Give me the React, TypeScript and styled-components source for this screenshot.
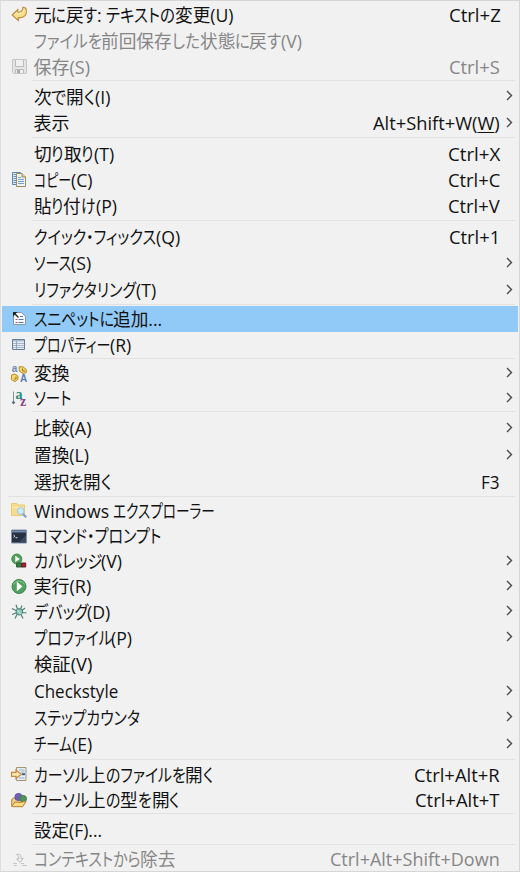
import React, { useLayoutEffect, useRef, useState } from "react";
import styled, { createGlobalStyle } from "styled-components";

const GlobalStyle = createGlobalStyle`
  html, body { margin: 0; padding: 0; background: #f1f1f1; }
`;

const Menu = styled.div`
  box-sizing: border-box;
  width: 520px;
  height: 872px;
  padding-top: 1px;
  overflow: hidden;
  background: #f1f1f1;
  border: 1px solid #d6d6d6;
  border-left-color: #dedede;
  font-family: "Open Sans", "Noto Sans CJK JP", sans-serif;
  font-size: 18px;
  font-feature-settings: "palt" 1;
  color: #111;
`;

const Row = styled.div<{ $height: number; $active?: boolean; $disabled?: boolean }>`
  display: grid;
  grid-template-columns: 16px 1fr auto 12px;
  align-items: center;
  box-sizing: border-box;
  height: ${(p) => p.$height}px;
  margin: 0 1px;
  padding: 0 2px 0 9px;
  line-height: ${(p) => p.$height}px;
  white-space: nowrap;
  color: ${(p) => (p.$disabled ? "#868686" : "#111")};
  background: ${(p) => (p.$active ? "#91c9f7" : "transparent")};
`;

const Separator = styled.div<{ $above: number; $below: number; $wide?: boolean }>`
  height: 1px;
  margin: ${(p) => p.$above}px 4px ${(p) => p.$below}px ${(p) => (p.$wide ? 7 : 31)}px;
  background: #e1e1e1;
`;

const IconSlot = styled.span`
  display: flex;
  width: 16px;
  height: 16px;
`;

const Label = styled.span`
  padding-left: 6.5px;
`;

const Shortcut = styled.span`
  padding-right: 4px;
`;

const Arrow = styled.svg`
  width: 12px;
  height: 12px;
  margin-bottom: 2px;
  fill: none;
  stroke: #4a4a4a;
  stroke-width: 1.4;
`;

const FitBox = styled.span`
  display: inline-flex;
  vertical-align: top;
  white-space: pre;
`;

const FitRun = styled.span`
  flex: none;
`;

const FitText = styled.span`
  display: inline-block;
  transform-origin: 0 50%;
`;

const Underline = styled.span`
  text-decoration: underline;
  text-underline-offset: 2px;
  text-decoration-thickness: 1px;
`;

const KANA = /([\u3040-\u30ff]+)/;

/**
 * Condenses its text horizontally until it takes the given width.
 * Where the text has kana, only the kana are condensed.
 */
function Fit({ width, children }: { width: number; children: React.ReactNode }) {
  const ref = useRef<HTMLSpanElement>(null);
  const [sizes, setSizes] = useState<{ width: number; scale: number }[]>([]);
  const runs: React.ReactNode[] =
    typeof children === "string" ? children.split(KANA).filter(Boolean) : [children];

  useLayoutEffect(() => {
    if (!ref.current) return;
    const natural = Array.from(
      ref.current.children,
      (run) => (run.firstElementChild as HTMLElement).offsetWidth
    );
    const isKana = runs.map((run) => typeof run === "string" && KANA.test(run));
    const hasKana = isKana.includes(true);
    const total = (keep: (i: number) => boolean) =>
      natural.reduce((sum, w, i) => (keep(i) ? sum + w : sum), 0);
    const flexible = total((i) => !hasKana || isKana[i]);
    const fixed = total((i) => hasKana && !isKana[i]) * 0.98;
    const scale = (width - fixed) / flexible;
    setSizes(
      natural.map((w, i) => {
        const s = !hasKana || isKana[i] ? scale : 0.98;
        return { width: w * s, scale: s };
      })
    );
  }, [width, children]);

  return (
    <FitBox ref={ref}>
      {runs.map((run, i) => (
        <FitRun key={i} style={{ width: sizes[i]?.width }}>
          <FitText style={{ transform: `scaleX(${sizes[i]?.scale ?? 1})` }}>{run}</FitText>
        </FitRun>
      ))}
    </FitBox>
  );
}

const Svg = styled.svg.attrs({ viewBox: "0 0 16 16", width: 16, height: 16 })`
  display: block;
  overflow: visible;
`;

const icons: Record<string, React.ReactNode> = {
  undo: (
    <Svg>
      <path d="M1.2 8 6.8 2.5V5.2C9.8 5.4 11.7 3.8 12 .3L14.8 1.2C17 7.5 13 11.3 7.3 10.8V13.6Z" fill="#fbdd83" stroke="#b98a3c" strokeWidth="1.1" />
      <path d="M3 8 5.9 5.4V7C10 7.3 12.6 5.4 13.2 2.2" fill="none" stroke="#fff2c4" />
    </Svg>
  ),
  save: (
    <Svg>
      <path d="M1.5.5H15.5V14.5H2.5L1.5 13.5Z" fill="#e4e4e4" stroke="#c6c6c6" />
      <path d="M4.5 1V7.5H12.5V1M4.5 14V10.5H12.5V14" fill="#f0f0f0" stroke="#bababa" />
      <path d="M6 11v3h3v-3Z" fill="#a9a9a9" />
    </Svg>
  ),
  copy: (
    <Svg>
      <path d="M1.5.5H9.5V12.5H1.5Z" fill="#dce9f6" stroke="#5d87ad" />
      <path d="M2.5 2.5H5M2.5 4.5H5M2.5 6.5H5M2.5 8.5H5M2.5 10.5H5" stroke="#6c93b9" />
      <path d="M5.5 1.5H11L14.5 5V14.5H5.5Z" fill="#e9f1f9" stroke="#9d8d59" />
      <path d="M11 1.5V5H14.5" fill="#e9d18e" stroke="#a08a4d" />
      <path d="M7 5.5H10M7 7.5H13M7 9.5H13M7 11.5H13" stroke="#7ba0c8" />
    </Svg>
  ),
  snippet: (
    <Svg>
      <path d="M2.5 1.5H10.5L14.5 5.5V13.5H2.5Z" fill="#f9fbff" stroke="#8297b2" />
      <path d="M2 1H6.5L2 5.5Z" fill="#222" />
      <path d="m4 3 3.5 3.5" stroke="#222" strokeWidth="1.3" />
      <path d="M4.5 8.5H6.5M4.5 11.5H6.5" stroke="#c25664" />
      <path d="M7.5 8.5H12.5M7.5 11.5H12.5M9 5.5H12" stroke="#5475b0" />
    </Svg>
  ),
  properties: (
    <Svg>
      <path d="M1.5 2.5H13.5V12.5H1.5Z" fill="#e6ecf5" stroke="#687b98" />
      <path d="M2 3H13V4.5H2Z" fill="#a9b9d0" />
      <path d="M2 6.5H13M2 8.5H13M2 10.5H13" stroke="#a9b7cc" />
      <path d="M5.5 4V12" stroke="#93a4bd" />
    </Svg>
  ),
  convert: (
    <Svg fontFamily="Liberation Sans" fontWeight="bold" fontSize="10">
      <text x=".7" y="6" fill="#6c89b8">a</text>
      <text x="9" y="16" fill="#5a7cb0">A</text>
      <path d="M8 .8H12L15.3 3.5V6.5L12 7.5 8.3 5ZM.5 9 4 8 7 10.3V13.2L4 15.7.5 13.5Z" fill="#f7d766" stroke="#b58a2c" />
      <path d="M11.5 2.5V5H14M3 13H5V10.5" fill="none" stroke="#9a7428" />
    </Svg>
  ),
  sort: (
    <Svg fontFamily="Liberation Serif" fontWeight="bold" fontSize="14">
      <path d="M2.5.5V12" stroke="#7a93a0" />
      <path d="M.7 11.5 2.5 9.8 4.3 11.5 2.5 13.5Z" fill="#5f6f7c" />
      <text x="4.5" y="7.5" fill="#288a7b">a</text>
      <text x="9" y="15.3" fill="#94428a">z</text>
    </Svg>
  ),
  explorer: (
    <Svg>
      <path d="M.5.5H6L7.5 2H13.5V12.5H.5Z" fill="#f8dc8e" stroke="#ecc873" />
      <path d="M1 4.5H13" stroke="#fff0b9" />
      <path d="m11.5 10.5 3.7 3.7" stroke="#7f9fc4" strokeWidth="2" />
      <circle cx="9.7" cy="8" r="3.4" fill="#cdeafb" stroke="#9fc3df" />
    </Svg>
  ),
  terminal: (
    <Svg>
      <path d="M.5 1H15.5V14H.5Z" fill="#27313f" stroke="#8494ad" />
      <path d="M1 1.5H15V3.5H1Z" fill="#7388aa" />
      <path d="M8 13.5 15 6V13.5Z" fill="#3b4a60" />
      <path d="m2.5 6 1.5 1.2-1.5 1.2M4.5 8.7H6.5" fill="none" stroke="#d4dfec" />
    </Svg>
  ),
  coverage: (
    <Svg>
      <circle cx="5.8" cy="5" r="5" fill="#4fa25a" stroke="#468a50" />
      <path d="m4.3 1.8 4.5 3.2-4.5 3.2Z" fill="#fff" />
      <path d="M5.5 9H10.5V13H5.5Z" fill="#28833d" stroke="#315f38" />
      <path d="M10.5 9H14.7V13H10.5Z" fill="#b01f2c" stroke="#5c2028" />
    </Svg>
  ),
  run: (
    <Svg>
      <circle cx="8" cy="7.5" r="7" fill="#4fa25f" stroke="#3f8450" />
      <path d="M2.5 5.5C4 1 12 1 13.5 5.5" fill="none" stroke="#8bc793" />
      <path d="M5.8 2.8 11.5 7.5 5.8 12.2Z" fill="#fff" />
    </Svg>
  ),
  debug: (
    <Svg>
      <path d="M6.5 5 5 .8M9.5 5l1.5-3.5M5 6.5 1 4.5M5 9 1 10.5M6 10.5l-2 4M10 10.5l2 4M11 6.5l3-2.5M11 8.5l4.5.5" fill="none" stroke="#4d7f76" strokeWidth="1.2" />
      <ellipse cx="8.3" cy="7.8" rx="3.3" ry="3.2" fill="#8cc8b4" stroke="#437f76" />
      <path d="m6 5.8 4.5 4.5" stroke="#d0eedb" />
    </Svg>
  ),
  openFile: (
    <Svg>
      <path d="M5.5.5H15V13.5H5.5Z" fill="#e6eff9" />
      <path d="M5.5 3V.5H15V13.5H5.5V11" fill="none" stroke="#a3966c" />
      <path d="M8 3H13.5M10 5H13.5M8 11H13.5" stroke="#8fb2d5" />
      <path d="M11 7.2H14" stroke="#3c6594" strokeWidth="2" />
      <path d="M.5 5.3H5V3L10.3 7.3 5 11.5V9.3H.5Z" fill="#fde6ac" stroke="#c08b42" strokeWidth="1.2" />
    </Svg>
  ),
  openType: (
    <Svg>
      <path d="M.7 13V6.5L2.5 5H6L7 7H12.5V9" fill="#f0cd83" stroke="#b8813c" />
      <circle cx="7.5" cy="4" r="3.6" fill="#7361ad" stroke="#6152a0" />
      <circle cx="12.2" cy="5.7" r="3.3" fill="#51945a" stroke="#448150" />
      <path d="M.7 13.5 4 9C8 10 10 9 15 8.5L11.7 13.7H1.7Z" fill="#fbdc85" stroke="#b87d30" />
    </Svg>
  ),
  remove: (
    <Svg>
      <path d="M2 11.5H6M10 11.5H13M3 13.5H6M11 13.5H16" stroke="#c4c4c4" />
      <path d="M5.5 2.5C8.5 1.5 10.5 3 10 6.5H12.2L9 10.5 5.5 7H7.7C7.7 5 7.2 3.7 5.5 2.5Z" fill="#ececec" stroke="#bdbdbd" />
    </Svg>
  ),
};

interface Item {
  label: string;
  width: number;
  height: number;
  icon?: string;
  keys?: React.ReactNode;
  keysWidth?: number;
  submenu?: boolean;
  active?: boolean;
  disabled?: boolean;
}

interface Divider {
  above: number;
  below: number;
  wide?: boolean;
}

const viewKeys = (
  <>
    Alt+Shift+W(<Underline>W</Underline>)
  </>
);

const entries: (Item | Divider)[] = [
  { label: "元に戻す: テキストの変更(U)", width: 200, height: 26, icon: "undo", keys: "Ctrl+Z", keysWidth: 51.5 },
  { label: "ファイルを前回保存した状態に戻す(V)", width: 268, height: 26, disabled: true },
  { label: "保存(S)", width: 57, height: 26, icon: "save", keys: "Ctrl+S", keysWidth: 51, disabled: true },
  { above: 0, below: 3 },
  { label: "次で開く(I)", width: 77, height: 26, submenu: true },
  { label: "表示", width: 36, height: 27, keys: viewKeys, keysWidth: 127, submenu: true },
  { above: 0, below: 3 },
  { label: "切り取り(T)", width: 81, height: 26, keys: "Ctrl+X", keysWidth: 52 },
  { label: "コピー(C)", width: 59, height: 26, icon: "copy", keys: "Ctrl+C", keysWidth: 52 },
  { label: "貼り付け(P)", width: 83, height: 26, keys: "Ctrl+V", keysWidth: 52 },
  { above: 1, below: 3 },
  { label: "クイック・フィックス(Q)", width: 147, height: 26, keys: "Ctrl+1", keysWidth: 51 },
  { label: "ソース(S)", width: 58, height: 27, submenu: true },
  { label: "リファクタリング(T)", width: 123, height: 27, submenu: true },
  { above: 0, below: 1 },
  { label: "スニペットに追加...", width: 128.5, height: 26, icon: "snippet", active: true },
  { label: "プロパティー(R)", width: 98, height: 26, icon: "properties" },
  { above: 0, below: 2 },
  { label: "変換", width: 35.5, height: 25, icon: "convert", submenu: true },
  { label: "ソート", width: 37, height: 25, icon: "sort", submenu: true },
  { above: 0, below: 3 },
  { label: "比較(A)", width: 58, height: 27, submenu: true },
  { label: "置換(L)", width: 55, height: 27, submenu: true },
  { label: "選択を開く", width: 78, height: 26, keys: "F3", keysWidth: 19 },
  { above: 1, below: 1, wide: true },
  { label: "Windows エクスプローラー", width: 181, height: 26, icon: "explorer" },
  { label: "コマンド・プロンプト", width: 127, height: 25, icon: "terminal" },
  { label: "カバレッジ(V)", width: 88.5, height: 25, icon: "coverage", submenu: true },
  { label: "実行(R)", width: 58, height: 25, icon: "run", submenu: true },
  { label: "デバッグ(D)", width: 77.5, height: 26, icon: "debug", submenu: true },
  { label: "プロファイル(P)", width: 98.5, height: 26, submenu: true },
  { label: "検証(V)", width: 58, height: 27 },
  { label: "Checkstyle", width: 84, height: 27, submenu: true },
  { label: "ステップカウンタ", width: 106, height: 26, submenu: true },
  { label: "チーム(E)", width: 59, height: 27, submenu: true },
  { above: 1, below: 2 },
  { label: "カーソル上のファイルを開く", width: 179.5, height: 26, icon: "openFile", keys: "Ctrl+Alt+R", keysWidth: 86 },
  { label: "カーソル上の型を開く", width: 146, height: 25, icon: "openType", keys: "Ctrl+Alt+T", keysWidth: 85 },
  { above: 0, below: 3 },
  { label: "設定(F)...", width: 68, height: 26 },
  { above: 1, below: 2 },
  { label: "コンテキストから除去", width: 142, height: 25, icon: "remove", keys: "Ctrl+Alt+Shift+Down", keysWidth: 170, disabled: true },
];

export default function App() {
  return (
    <>
      <GlobalStyle />
      <Menu role="menu" lang="ja">
        {entries.map((e, i) =>
          "label" in e ? (
            <Row key={i} role="menuitem" $height={e.height} $active={e.active} $disabled={e.disabled}>
              <IconSlot>{e.icon && icons[e.icon]}</IconSlot>
              <Label>
                <Fit width={e.width}>{e.label}</Fit>
              </Label>
              <Shortcut>{e.keys && <Fit width={e.keysWidth ?? 50}>{e.keys}</Fit>}</Shortcut>
              {e.submenu && (
                <Arrow viewBox="0 0 12 12">
                  <path d="m3 1 4.5 4.5L3 10" />
                </Arrow>
              )}
            </Row>
          ) : (
            <Separator key={i} $above={e.above} $below={e.below} $wide={e.wide} />
          )
        )}
      </Menu>
    </>
  );
}
